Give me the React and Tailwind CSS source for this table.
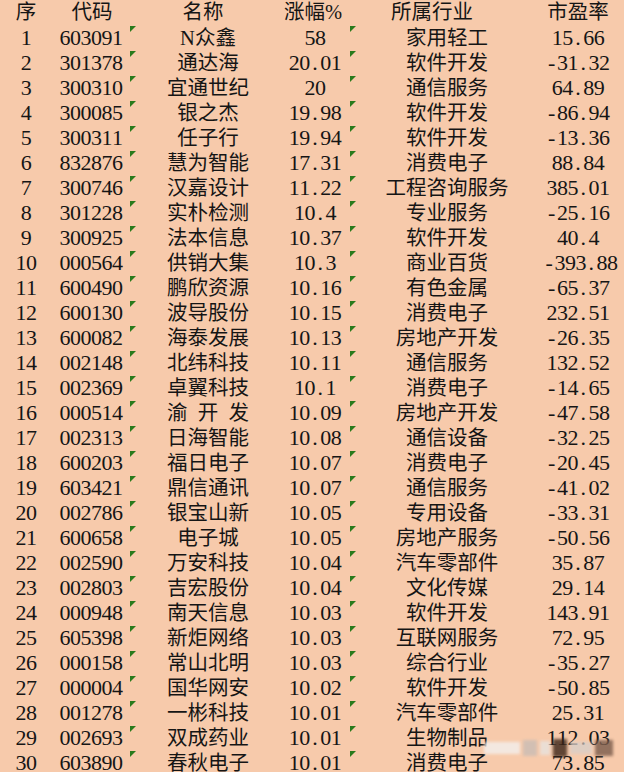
import React from 'react';

// 涨幅榜数据：序, 代码, 名称, 涨幅%, 所属行业, 市盈率
const rows = [
    [1, '603091', 'N众鑫', '58', '家用轻工', '15.66'],
    [2, '301378', '通达海', '20.01', '软件开发', '-31.32'],
    [3, '300310', '宜通世纪', '20', '通信服务', '64.89'],
    [4, '300085', '银之杰', '19.98', '软件开发', '-86.94'],
    [5, '300311', '任子行', '19.94', '软件开发', '-13.36'],
    [6, '832876', '慧为智能', '17.31', '消费电子', '88.84'],
    [7, '300746', '汉嘉设计', '11.22', '工程咨询服务', '385.01'],
    [8, '301228', '实朴检测', '10.4', '专业服务', '-25.16'],
    [9, '300925', '法本信息', '10.37', '软件开发', '40.4'],
    [10, '000564', '供销大集', '10.3', '商业百货', '-393.88'],
    [11, '600490', '鹏欣资源', '10.16', '有色金属', '-65.37'],
    [12, '600130', '波导股份', '10.15', '消费电子', '232.51'],
    [13, '600082', '海泰发展', '10.13', '房地产开发', '-26.35'],
    [14, '002148', '北纬科技', '10.11', '通信服务', '132.52'],
    [15, '002369', '卓翼科技', '10.1', '消费电子', '-14.65'],
    [16, '000514', '渝\u2002开\u2002发', '10.09', '房地产开发', '-47.58'],
    [17, '002313', '日海智能', '10.08', '通信设备', '-32.25'],
    [18, '600203', '福日电子', '10.07', '消费电子', '-20.45'],
    [19, '603421', '鼎信通讯', '10.07', '通信服务', '-41.02'],
    [20, '002786', '银宝山新', '10.05', '专用设备', '-33.31'],
    [21, '600658', '电子城', '10.05', '房地产服务', '-50.56'],
    [22, '002590', '万安科技', '10.04', '汽车零部件', '35.87'],
    [23, '002803', '吉宏股份', '10.04', '文化传媒', '29.14'],
    [24, '000948', '南天信息', '10.03', '软件开发', '143.91'],
    [25, '605398', '新炬网络', '10.03', '互联网服务', '72.95'],
    [26, '000158', '常山北明', '10.03', '综合行业', '-35.27'],
    [27, '000004', '国华网安', '10.02', '软件开发', '-50.85'],
    [28, '001278', '一彬科技', '10.01', '汽车零部件', '25.31'],
    [29, '002693', '双成药业', '10.01', '生物制品', '112.03'],
    [30, '603890', '春秋电子', '10.01', '消费电子', '73.85'],
];

const grid = 'grid grid-cols-[52px_78px_150px_70px_194px_68px_12px] h-[25px] items-center leading-[25px]';

// 等宽数字（模仿宋体半角）
const Num = ({ value }) => (
    <span className="whitespace-nowrap text-[22px]">
        {String(value).split('').map((c, i) => (
            <span key={i} className="inline-block w-[10.5px] text-center">{c}</span>
        ))}
    </span>
);

// Excel 绿色小三角
const Flag = () => (
    <span className="absolute left-0 top-[1px] w-0 h-0 border-t-[6px] border-r-[6px] border-t-[#2a7a1c] border-r-transparent" />
);

const App = () => {
    return (
        <div
            className="relative w-[624px] h-[772px] overflow-hidden bg-[#f7caab] text-[#151515] text-[20.5px]"
            style={{ fontFamily: '"Liberation Serif", "Noto Sans CJK SC", serif' }}
        >
            <div className={grid}>
                <div className="text-center">序</div>
                <div className="text-center pl-[2px]">代码</div>
                <div className="text-center pr-[4px]">名称</div>
                <div className="text-center pr-[4px] whitespace-nowrap">涨幅%</div>
                <div className="text-center pr-[30px]">所属行业</div>
                <div className="text-center">市盈率</div>
                <div />
            </div>

            {rows.map((r) => (
                <div key={r[0]} className={grid}>
                    <div className="text-center"><Num value={r[0]} /></div>
                    <div className="text-center"><Num value={r[1]} /></div>
                    <div className="relative h-full flex items-center justify-center pl-[6px] whitespace-nowrap">
                        <Flag />
                        {r[2]}
                    </div>
                    <div className="text-center"><Num value={r[3]} /></div>
                    <div className="relative h-full flex items-center justify-center whitespace-nowrap">
                        <Flag />
                        {r[4]}
                    </div>
                    <div className="text-center"><Num value={r[5]} /></div>
                    <div />
                </div>
            ))}

            {/* 右下角模糊水印 */}
            <div className="absolute left-[484px] top-[738px] w-[130px] h-[20px] flex items-center gap-[3px] blur-[1.5px] opacity-80">
                <div className="w-[36px] h-[12px] bg-[#f3f0ee]" />
                <div className="w-[14px] h-[16px] bg-[#c9bdb5]" />
                <div className="w-[10px] h-[14px] bg-[#e8e3df]" />
                <div className="w-[14px] h-[18px] bg-[#3b2418]" />
                <div className="w-[22px] h-[12px] bg-[#d9cfc8]" />
                <div className="w-[18px] h-[16px] bg-[#7a5c4c]" />
            </div>
        </div>
    );
};

export default App;
